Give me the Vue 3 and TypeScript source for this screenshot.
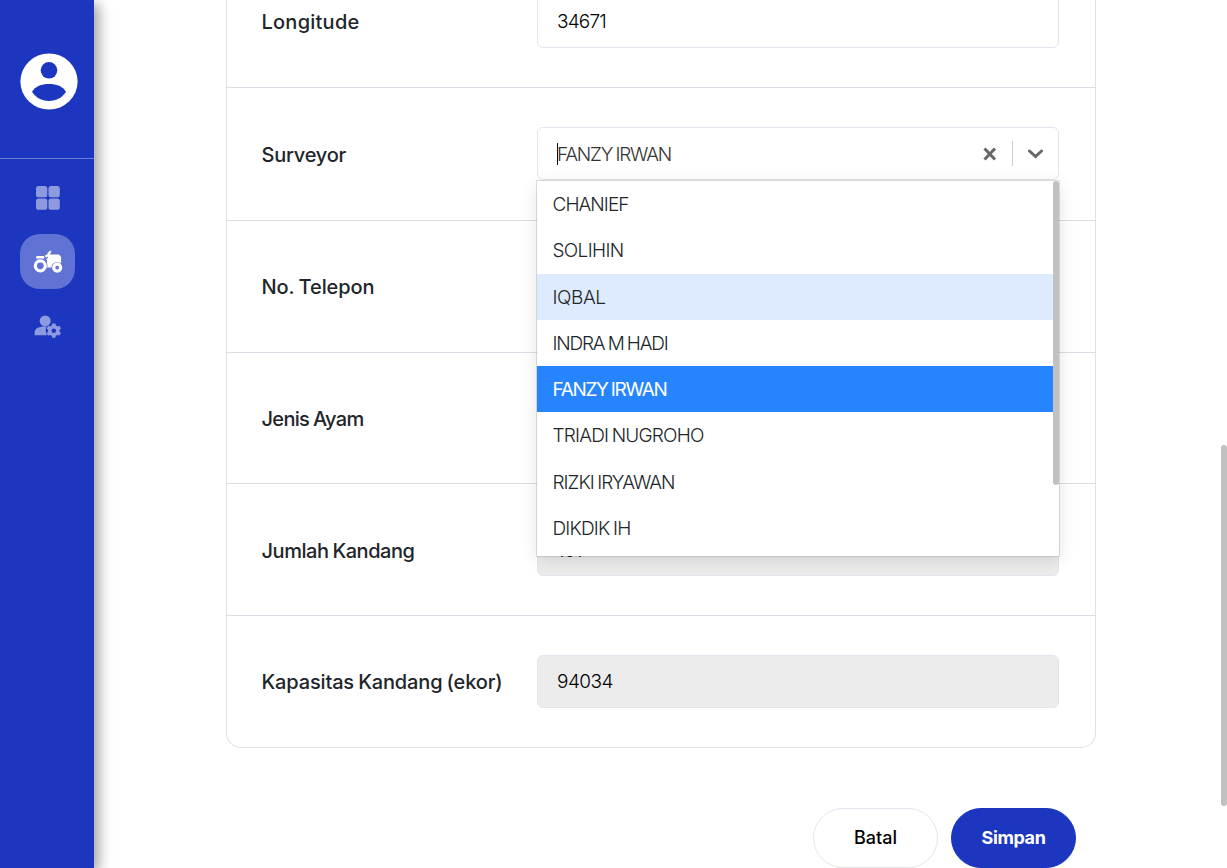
<script setup lang="ts">
interface Option { name: string; width: number; state?: 'focused' | 'selected' }

const options: Option[] = [
  { name: 'CHANIEF', width: 76 },
  { name: 'SOLIHIN', width: 71 },
  { name: 'IQBAL', width: 53, state: 'focused' },
  { name: 'INDRA M HADI', width: 115 },
  { name: 'FANZY IRWAN', width: 114, state: 'selected' },
  { name: 'TRIADI NUGROHO', width: 151 },
  { name: 'RIZKI IRYAWAN', width: 122 },
  { name: 'DIKDIK IH', width: 78 },
]

// Adjusts tracking so that a text run occupies the given width.
const vFit = {
  mounted(el: HTMLElement, binding: { value: number }) {
    const chars = (el.textContent ?? '').length
    const natural = el.getBoundingClientRect().width
    el.style.letterSpacing = `${(binding.value - natural) / chars}px`
  },
}
</script>

<template>
  <div class="screen">
    <aside class="sidebar">
      <div class="profile">
        <svg class="avatar" viewBox="0 0 58 57">
          <ellipse cx="29" cy="28.5" rx="28.6" ry="28.1" fill="#fff" />
          <circle cx="29" cy="17.3" r="8.3" />
          <path d="M12 38.800C15 33.400 21.500 31 29 31s14 2.400 17 7.800C42.500 44.500 36.500 48 29 48s-13.500-3.500-17-9.200z" />
        </svg>
      </div>
      <nav class="nav">
        <a class="item">
          <svg class="faded" width="24" height="24" viewBox="0 0 24 24">
            <rect width="11.300" height="11.300" rx="2.600" /><rect x="12.500" width="11.300" height="11.300" rx="2.600" />
            <rect y="12.500" width="11.300" height="11.300" rx="2.600" /><rect x="12.500" y="12.500" width="11.300" height="11.300" rx="2.600" />
          </svg>
        </a>
        <a class="item active">
          <svg width="30" height="24" viewBox="0 0 30 24">
            <rect x="3" y="6" width="8.400" height="2.800" rx="1.400" fill="#fff" />
            <path fill="#fff" d="M11.800 5.600l2.500-1.200.4-1.700 2.700-2.200 1.200 1.600-1.700 1.400.4 1h8.600l2.200 2.200V17.500H14V10l-1-.6 2-1.700-.3-1.200-1.900 1.200z" />
            <circle class="gap" cx="7.300" cy="15.800" r="7.200" />
            <circle class="gap" cx="24.200" cy="17.600" r="5.700" />
            <circle cx="7.300" cy="15.800" r="5" fill="none" stroke="#fff" stroke-width="3.200" />
            <circle cx="24.200" cy="17.600" r="3.500" fill="none" stroke="#fff" stroke-width="3.200" />
          </svg>
        </a>
        <a class="item">
          <svg class="faded" width="28" height="24" viewBox="0 0 28 24">
            <circle cx="11.200" cy="6.900" r="5.500" />
            <path d="M.6 21.300v-2.800c0-4.500 5-6 10.500-6h1.600a9 9 0 0 0 .6 8.800z" />
            <path transform="translate(-.8 -.4)" fill-rule="evenodd" d="M19 10h3.200l.5 2 1.500.8 2-.6 1.500 2.700-1.400 1.400v1.600l1.400 1.400-1.500 2.700-2-.6-1.500.8-.5 2H19l-.5-2-1.500-.8-2 .6-1.500-2.700 1.400-1.400v-1.600l-1.400-1.400 1.500-2.700 2 .6 1.500-.8zm1.600 4.900a2.300 2.300 0 1 0 0 4.600 2.300 2.300 0 0 0 0-4.600z" />
          </svg>
        </a>
      </nav>
    </aside>

    <main class="content">
      <form class="card" @submit.prevent>
        <div class="row">
          <label><span v-fit="98">Longitude</span></label>
          <div class="field"><span v-fit="49">34671</span></div>
        </div>
        <div class="row low">
          <label><span v-fit="84.5">Surveyor</span></label>
          <div class="field select">
            <i class="caret"></i>
            <span v-fit="114" class="value">FANZY IRWAN</span>
            <svg class="clear" width="14" height="14" viewBox="0 0 14 14"><path d="M1.500 1.500l10.500 11m0-11l-10.500 11" /></svg>
            <i class="divider"></i>
            <svg class="chevron" width="16" height="10" viewBox="0 0 16 10"><path d="M1.500 2l6 5.500L13.500 2" /></svg>
            <div class="menu">
              <div v-for="o in options" :key="o.name" class="option" :class="o.state"><span v-fit="o.width">{{ o.name }}</span></div>
              <i class="thumb"></i>
            </div>
          </div>
        </div>
        <div class="row">
          <label><span v-fit="113">No. Telepon</span></label>
          <div class="field"></div>
        </div>
        <div class="row">
          <label><span v-fit="102">Jenis Ayam</span></label>
          <div class="field"></div>
        </div>
        <div class="row low">
          <label><span v-fit="153">Jumlah Kandang</span></label>
          <div class="field disabled"><span v-fit="25">101</span></div>
        </div>
        <div class="row">
          <label><span v-fit="241">Kapasitas Kandang (ekor)</span></label>
          <div class="field disabled"><span v-fit="56">94034</span></div>
        </div>
      </form>
      <div class="actions">
        <button class="btn"><span v-fit="43">Batal</span></button>
        <button class="btn primary"><span v-fit="64">Simpan</span></button>
      </div>
    </main>
    <i class="page-thumb"></i>
  </div>
</template>

<style>
body { margin: 0; overflow: hidden; }
</style>

<style scoped>
* { box-sizing: border-box; }
.screen {
  position: relative;
  display: flex;
  width: 1227px;
  height: 868px;
  overflow: hidden;
  background: #fff;
  font-family: Inter, "Open Sans", sans-serif;
  color: #212529;
}
span { white-space: nowrap; word-spacing: -0.05em; }
.sidebar {
  flex: none;
  width: 94px;
  height: 868px;
  background: #1d36c0;
  box-shadow: 5px 4px 12px rgba(0, 0, 0, 0.36);
}
.profile {
  height: 159px;
  padding: 53px 0 0 20px;
  border-bottom: 1px solid #6a7ad6;
}
.avatar { display: block; width: 58px; height: 57px; fill: #1d36c0; }
.nav { display: flex; flex-direction: column; gap: 9px; padding: 11px 0 0 20px; }
.item {
  display: flex;
  align-items: center;
  justify-content: center;
  width: 55px;
  height: 55px;
  border-radius: 20px;
}
.active { background: #6072d3; }
.gap { fill: #6072d3; }
.faded { fill: #8e9adf; }
.content { width: 870px; margin: -44px 0 0 132px; }
.card {
  display: grid;
  grid-template-rows: 132px 133px 132px 131px 132px 131px;
  border: 1px solid #dee2e6;
  border-top: 0;
  border-radius: 0 0 15px 15px;
}
.row {
  display: flex;
  align-items: flex-start;
  padding: 39px 36px 0 34.500px;
  border-bottom: 1px solid #dcdee6;
}
.row:last-child { border-bottom: 0; }
label {
  display: flex;
  align-items: center;
  width: 275.500px;
  height: 53px;
  font-size: 20px;
  font-weight: 500;
}
.low label { padding-top: 2px; }
.field {
  display: flex;
  align-items: center;
  width: 522px;
  height: 53px;
  padding: 0 19px;
  border: 1px solid #e4e4ef;
  border-radius: 6px;
  font-size: 19px;
  font-weight: 300;
  color: #000;
}
.disabled { background: #ececec; }
.low .disabled { padding-top: 1px; }
.select { position: relative; color: #333; }
.caret { width: 1px; height: 22px; background: #111; margin-right: -1px; }
.value { margin-right: auto; padding-top: 2px; }
.clear { fill: none; stroke: #666; stroke-width: 3; margin-right: 15px; }
.divider { width: 1px; height: 25px; background: #ccc; margin-right: 15px; }
.chevron { fill: none; stroke: #666; stroke-width: 3; stroke-linecap: round; margin-right: -5px; }
.menu {
  position: absolute;
  z-index: 2;
  left: -1px;
  top: 53px;
  width: 522px;
  height: 375px;
  background: #fff;
  color: #212529;
  box-shadow: 0 0 0 1px rgba(0, 0, 0, 0.1), 0 0 1px rgba(0, 0, 0, 0.1), 0 4px 16px rgba(0, 0, 0, 0.12);
}
.option {
  display: flex;
  align-items: center;
  width: 516px;
  height: 46.250px;
  padding: 1px 0 0 15.500px;
}
.menu .focused { background: #deebff; }
.menu .selected { background: #2684ff; color: #fff; font-weight: 400; }
.thumb {
  position: absolute;
  right: 0;
  top: 0;
  width: 6px;
  height: 304px;
  border-radius: 3px;
  background: #c1c1c1;
}
.actions { display: flex; justify-content: flex-end; gap: 13px; padding: 60px 20px 0 0; }
.btn {
  width: 125px;
  height: 60px;
  padding: 0 0 1px;
  border: 1px solid #e4e4ef;
  border-radius: 30px;
  background: #fff;
  color: #000;
  font: 500 18px Inter, "Open Sans", sans-serif;
}
.primary { background: #1d36c0; border-color: #1d36c0; color: #fff; font-weight: 700; }
.page-thumb {
  position: absolute;
  right: 0;
  top: 445px;
  width: 6px;
  height: 361px;
  border-radius: 3px;
  background: #c1c1c1;
}
</style>
